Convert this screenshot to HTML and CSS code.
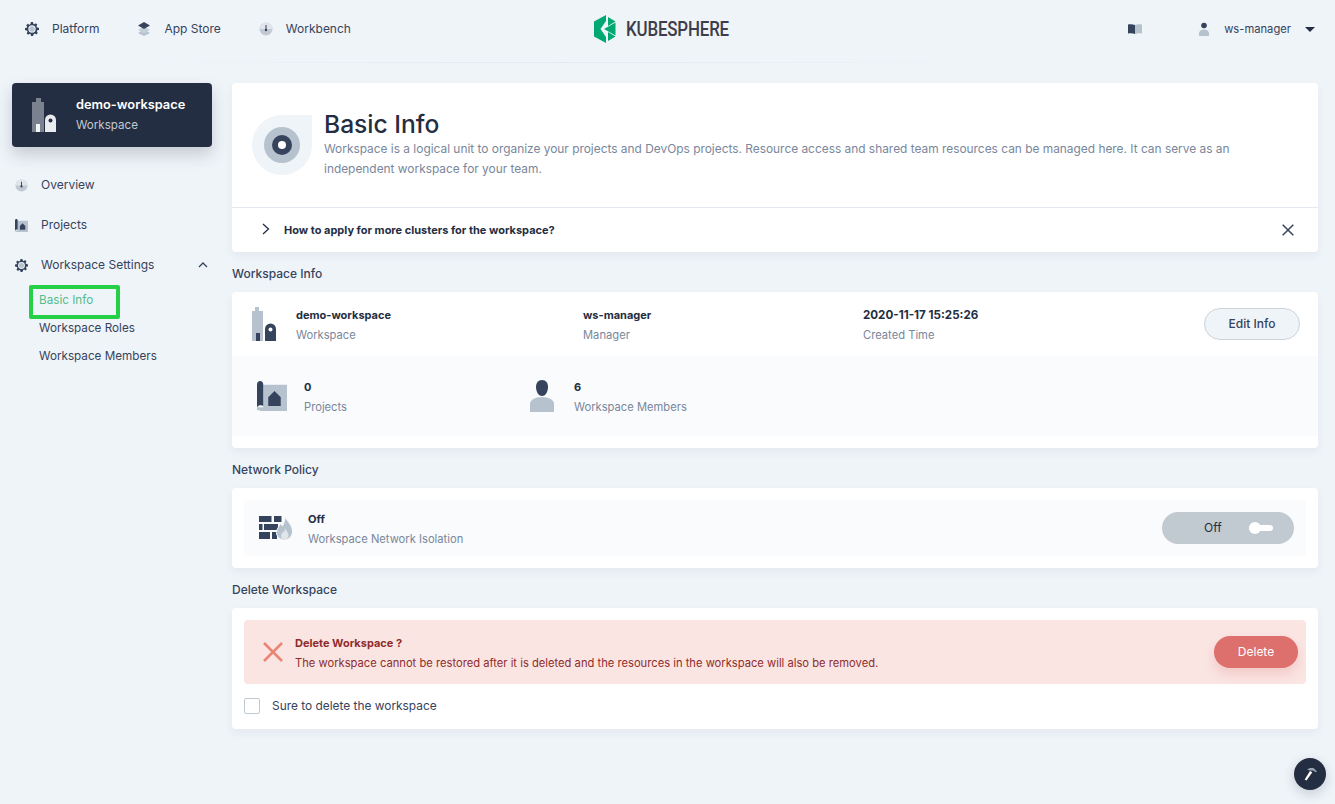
FILE: index.html
```html
<!DOCTYPE html>
<html lang="en">
<head>
  <meta charset="UTF-8">
  <meta name="viewport" content="width=device-width, initial-scale=1.0">
  <title>Basic Info - KubeSphere</title>
  <link rel="stylesheet" href="styles.css">
</head>
<body>
  <header class="topbar">
    <nav class="topnav">
      <a class="topnav-item">
        <svg class="ico14" viewBox="0 0 14 14"><use href="#gear"/></svg>
        <span>Platform</span>
      </a>
      <a class="topnav-item">
        <svg class="ico14" viewBox="0 0 14 14">
          <path d="M7 7.5 1 11l6 3 6-3z" fill="#b6c2cd"/>
          <path d="M7 4.500 1 8l6 3.300L13 8z" fill="#c5cfd8"/>
          <path d="M7 0 1 3.600 7 7l6-3.400z" fill="#36435c"/>
        </svg>
        <span>App Store</span>
      </a>
      <a class="topnav-item">
        <svg class="ico14" viewBox="0 0 14 14"><use href="#gauge"/></svg>
        <span>Workbench</span>
      </a>
    </nav>
    <div class="logo">
      <svg class="logo-mark" viewBox="0 0 25 28">
        <path d="M0 6.500 12 0v6L6.500 14l5.500 8v6L0 21.500z" fill="#00a971"/>
        <path d="M14 2l7.500 4.500L14 11z" fill="#00a971"/>
        <path d="M10 14l11.500-6.500v13z" fill="#00a971"/>
        <path d="M14 17l7.500 4.500L14 26z" fill="#00a971"/>
      </svg>
      <span class="logo-text">KUBESPHERE</span>
    </div>
    <div class="topbar-right">
      <svg class="book" viewBox="0 0 14 10">
        <path d="M0 .5C2 0 5 0 7 1v9C5 9 2 9 0 9.500z" fill="#36435c"/>
        <path d="M7 1c2-1 5-1 7-.5v9C12 9 9 9 7 10z" fill="#b6c2cd"/>
      </svg>
      <div class="user">
        <svg class="ico14" viewBox="0 0 14 14">
          <circle cx="7" cy="3.500" r="2.800" fill="#36435c"/>
          <path d="M2 14v-2.500C2 9 4.500 7.500 7 7.500s5 1.500 5 4V14z" fill="#b6c2cd"/>
        </svg>
        <span>ws-manager</span>
        <i class="caret"></i>
      </div>
    </div>
  </header>

  <div class="layout">
    <aside class="sidebar">
      <div class="ws-card">
        <svg class="ws-icon" viewBox="0 0 24 34">
          <path d="M0 34V4h4V0h5v4h3v30H8v-8H4v8z" fill="#7b828f"/>
          <path d="M4 34v-8h4v8z" fill="#f4f5f7"/>
          <path d="M13 34V22a5.500 5.500 0 0 1 11 0v12z" fill="#e9ebee"/>
          <circle cx="18.500" cy="22.500" r="2" fill="#242e42"/>
        </svg>
        <div>
          <div class="ws-name">demo-workspace</div>
          <div class="ws-type">Workspace</div>
        </div>
      </div>

      <ul class="menu">
        <li class="menu-item">
          <svg class="ico14" viewBox="0 0 14 14"><use href="#gauge"/></svg>
          <span>Overview</span>
        </li>
        <li class="menu-item">
          <svg class="ico14" viewBox="0 0 24 24"><use href="#projects"/></svg>
          <span>Projects</span>
        </li>
        <li class="menu-item">
          <svg class="ico14" viewBox="0 0 14 14"><use href="#gear"/></svg>
          <span>Workspace Settings</span>
          <svg class="chevron-up" viewBox="0 0 10 6"><path d="M1 5l4-4 4 4" fill="none" stroke="#36435c" stroke-width="1.300"/></svg>
        </li>
      </ul>
      <ul class="submenu">
        <li class="submenu-item is-active">Basic Info</li>
        <li class="submenu-item">Workspace Roles</li>
        <li class="submenu-item">Workspace Members</li>
      </ul>
    </aside>

    <main class="content">
      <section class="card banner">
        <div class="banner-head">
          <div class="banner-icon">
            <svg viewBox="0 0 36 36" class="banner-disc">
              <circle cx="18" cy="18" r="18" fill="#b6c2cd"/>
              <circle cx="18" cy="18" r="10" fill="#36435c"/>
              <circle cx="18" cy="18" r="4" fill="#fff"/>
            </svg>
          </div>
          <div class="banner-text">
            <h1>Basic Info</h1>
            <p>Workspace is a logical unit to organize your projects and DevOps projects. Resource access and shared team resources can be managed here. It can serve as an independent workspace for your team.</p>
          </div>
        </div>
        <div class="banner-tip">
          <svg class="tip-chevron" viewBox="0 0 8 12"><path d="M1 1l5.500 5L1 11" fill="none" stroke="#242e42" stroke-width="1.300"/></svg>
          <strong>How to apply for more clusters for the workspace?</strong>
          <svg class="tip-close" viewBox="0 0 12 12"><path d="M.7.700l10.600 10.600M11.300.700.700 11.300" fill="none" stroke="#36435c" stroke-width="1.500"/></svg>
        </div>
      </section>

      <h2 class="section-title">Workspace Info</h2>
      <section class="card info">
        <div class="info-top">
          <div class="info-cell cell-ws">
            <svg class="info-ws-icon" viewBox="0 0 24 34">
              <path d="M0 34V4h3V0h4v4h4v30H8v-8H4v8z" fill="#b6c2cd"/>
              <path d="M4 34v-8h4v8z" fill="#36435c"/>
              <path d="M13 34V22a5.500 5.500 0 0 1 11 0v12z" fill="#36435c"/>
              <circle cx="18.500" cy="22.500" r="2" fill="#fff"/>
            </svg>
            <div class="pair">
              <div class="val">demo-workspace</div>
              <div class="lbl">Workspace</div>
            </div>
          </div>
          <div class="info-cell cell-mgr">
            <div class="pair">
              <div class="val">ws-manager</div>
              <div class="lbl">Manager</div>
            </div>
          </div>
          <div class="info-cell cell-time">
            <div class="pair">
              <div class="val val-time">2020-11-17 15:25:26</div>
              <div class="lbl">Created Time</div>
            </div>
          </div>
          <button class="btn-edit">Edit Info</button>
        </div>
        <div class="stats">
          <div class="stat stat-projects">
            <svg class="stat-icon-p" viewBox="0 0 24 24"><use href="#projects"/></svg>
            <div>
              <div class="val">0</div>
              <div class="lbl">Projects</div>
            </div>
          </div>
          <div class="stat">
            <svg class="stat-icon-m" viewBox="0 0 24 32">
              <path d="M12 0c4 0 6 3 6 7s-2 9-6 9-6-5-6-9 2-7 6-7z" fill="#36435c"/>
              <path d="M0 32v-8c0-4 5-7 12-7s12 3 12 7v8z" fill="#b6c2cd"/>
            </svg>
            <div>
              <div class="val">6</div>
              <div class="lbl">Workspace Members</div>
            </div>
          </div>
        </div>
      </section>

      <h2 class="section-title">Network Policy</h2>
      <section class="card policy">
        <div class="policy-row">
          <svg class="policy-icon" viewBox="0 0 34 24">
            <path d="M0 0h12.500v6H0zM15 0h7.500v6H15zM0 8h3.500v6H0zM5 8h14v6H5zM0 16h11v7H0zM13 16h5v7h-5z" fill="#36435c"/>
            <path d="M26 0c1 5 7.500 8 7.500 15.500 0 4.500-3.500 8.500-8 8.500s-8-3.500-8-7.500c0-4 3-6 4-9.500l2 3c1.500-3 2.500-6 2.500-10.500z" fill="#b6c2cd" stroke="#f9fbfd" stroke-width="1"/>
            <path d="M26 12c1 3 3.500 4.500 3.500 7.500 0 2-1.500 4-4 4s-3.500-2-3.500-3.500c0-2 1.500-3 2-4.500l1 1c.5-1.500 1-3 1-4.500z" fill="#dfe5ea"/>
          </svg>
          <div class="pair">
            <div class="val">Off</div>
            <div class="lbl">Workspace Network Isolation</div>
          </div>
          <div class="toggle">
            <span>Off</span>
            <i class="knob"></i>
          </div>
        </div>
      </section>

      <h2 class="section-title">Delete Workspace</h2>
      <section class="card danger">
        <div class="alert">
          <svg class="alert-x" viewBox="0 0 20 20"><path d="M1 1l18 18M19 1 1 19" fill="none" stroke="#ea8573" stroke-width="2.500"/></svg>
          <div class="alert-text">
            <strong>Delete Workspace ?</strong>
            <p>The workspace cannot be restored after it is deleted and the resources in the workspace will also be removed.</p>
          </div>
          <button class="btn-delete">Delete</button>
        </div>
        <label class="confirm">
          <i class="checkbox"></i>
          <span>Sure to delete the workspace</span>
        </label>
      </section>
    </main>
  </div>

  <a class="tool-fab">
    <svg viewBox="0 0 16 16" class="tool-icon">
      <path d="M8 5l2.300 1.200L4.500 14.500 2.700 13.500z" fill="#fff"/>
      <path d="M5 3.500 8 2h3.500L15 5.500l-1 .8-3-1.800H8z" fill="#9aa5b3"/>
    </svg>
  </a>

  <svg class="defs" width="0" height="0">
    <defs>
      <g id="gear">
        <path fill-rule="evenodd" d="M6 0h2l.3 1.700 1.100.5L10.900 1.200l1.500 1.500-1 1.400.5 1.100L14 6v2l-1.700.3-.5 1.100 1 1.500-1.500 1.500-1.400-1-1.100.5L8 14H6l-.3-1.700-1.100-.5-1.500 1L1.600 11.300l1-1.500-.5-1.100L0 8V6l1.700-.3.5-1.100-1-1.400L2.700 1.700l1.500 1 1.100-.5zM7 3.300a3.700 3.700 0 1 0 0 7.400 3.700 3.700 0 0 0 0-7.400z" fill="#36435c"/>
        <circle cx="7" cy="7" r="2.700" fill="#b6c2cd"/>
      </g>
      <g id="gauge">
        <circle cx="7" cy="7" r="6.500" fill="#c1cad3"/>
        <path d="M.5 7a6.500 6.500 0 0 1 13 0z" fill="#dfe5ea"/>
        <path d="M6.500 3h1v5.500h-1z" fill="#36435c"/>
        <circle cx="7" cy="8" r="1.200" fill="#36435c"/>
      </g>
      <g id="projects">
        <path d="M5 3h19v21H3l-3-1v-2h5z" fill="#b6c2cd"/>
        <path d="M0 3c0-2 1-3 2.500-3S5 1 5 3v17c-1-1-4-1-5 1z" fill="#36435c"/>
        <path d="M9 20v-7l5-5 5 5v7z" fill="#36435c"/>
      </g>
    </defs>
  </svg>
</body>
</html>
```

FILE: styles.css
```css
* {
  box-sizing: border-box;
}
html, body {
  height: 100%;
}
body {
  margin: 0;
  min-height: 804px;
  overflow: hidden;
  background: #eff4f9;
  color: #36435c;
  font-family: Inter, "Noto Sans", sans-serif;
  font-size: 12px;
  line-height: 20px;
}
h1, h2, p, ul {
  margin: 0;
  padding: 0;
}
ul {
  list-style: none;
}
svg {
  display: block;
  flex: none;
}
.ico14 {
  width: 14px;
  height: 14px;
}
.defs {
  position: absolute;
}

/* top bar */
.topbar {
  position: relative;
  display: flex;
  align-items: center;
  justify-content: space-between;
  height: 63px;
  padding: 0 20px 5px 25px;
}
.topbar::after {
  content: "";
  position: absolute;
  left: 120px;
  right: 330px;
  bottom: 0;
  height: 1px;
  background: linear-gradient(90deg, #eff4f9, #e3e9ef 50%, #eff4f9);
}
.topnav {
  display: flex;
  gap: 38px;
}
.topnav-item {
  display: flex;
  align-items: center;
  gap: 13px;
}
.logo {
  position: absolute;
  left: 594px;
  top: 15px;
  display: flex;
  align-items: center;
  gap: 7px;
}
.logo-mark {
  width: 25px;
  height: 28px;
}
.logo-text {
  color: #3e3d49;
  font-family: "Roboto", sans-serif;
  font-size: 20px;
  font-weight: 500;
  line-height: 28px;
  letter-spacing: -.2px;
  transform: scaleX(.845);
  transform-origin: left center;
}
.topbar-right {
  display: flex;
  align-items: center;
  gap: 55px;
}
.book {
  width: 14px;
  height: 10px;
}
.user {
  display: flex;
  align-items: center;
  gap: 13px;
  font-size: 11.2px;
}
.caret {
  width: 0;
  height: 0;
  margin-left: 1px;
  border-left: 5px solid transparent;
  border-right: 5px solid transparent;
  border-top: 5px solid #242e42;
}

/* layout */
.layout {
  display: flex;
  padding-top: 20px;
}
.sidebar {
  width: 232px;
  flex: none;
  padding-left: 12px;
}
.content {
  width: 1086px;
  flex: none;
}

/* sidebar */
.ws-card {
  display: flex;
  align-items: center;
  gap: 20px;
  width: 200px;
  height: 64px;
  padding: 0 20px;
  border-radius: 4px;
  background: #242e42;
  box-shadow: 0 8px 16px rgba(36, 46, 66, .2);
  color: #fff;
}
.ws-icon {
  width: 24px;
  height: 34px;
}
.ws-name {
  font-size: 12.8px;
  font-weight: 600;
}
.ws-type {
  color: #c1c9d1;
  font-size: 11.6px;
}
.menu {
  margin-top: 18px;
}
.menu-item {
  display: flex;
  align-items: center;
  gap: 13px;
  height: 40px;
  padding-left: 3px;
}
.menu-item .ico14 {
  width: 13px;
  height: 13px;
}
.chevron-up {
  width: 10px;
  height: 6px;
  margin-left: 31px;
}
.submenu {
  margin-top: 1px;
  padding-left: 27px;
  font-size: 11.7px;
}
.submenu-item {
  height: 28px;
  line-height: 28px;
}
.submenu-item.is-active {
  position: relative;
  color: #55bc8a;
}
.submenu-item.is-active::after {
  content: "";
  box-sizing: border-box;
  position: absolute;
  left: -10px;
  top: -1px;
  width: 91px;
  height: 34px;
  border: 4px solid #25d047;
  border-radius: 2px;
}

/* cards */
.card {
  border-radius: 4px;
  background: #fff;
  box-shadow: 0 4px 8px rgba(36, 46, 66, .06);
}
.section-title {
  height: 40px;
  font-size: 12px;
  font-weight: 500;
  line-height: 44px;
}
.banner-head {
  display: flex;
  height: 125px;
  padding: 20px 20px 0;
  border-bottom: 1px solid #e3e9ef;
}
.banner-icon {
  display: flex;
  align-items: center;
  justify-content: center;
  width: 60px;
  height: 60px;
  margin-top: 12px;
  border-radius: 50% 0 50% 50%;
  background: #eff4f9;
  flex: none;
}
.banner-disc {
  width: 36px;
  height: 36px;
}
.banner-text {
  margin-left: 12px;
}
.banner-text h1 {
  height: 35px;
  margin-top: 1px;
  color: #242e42;
  font-size: 24.6px;
  font-weight: 500;
  line-height: 40px;
}
.banner-text p {
  color: #79879c;
  font-size: 11.9px;
  line-height: 20px;
}
.banner-tip {
  display: flex;
  align-items: center;
  height: 44px;
  padding: 0 24px 0 30px;
  color: #242e42;
}
.tip-chevron {
  width: 8px;
  height: 12px;
  margin-top: -2px;
}
.banner-tip strong {
  margin-left: 14px;
  font-size: 11px;
  font-weight: 700;
}
.tip-close {
  width: 12px;
  height: 12px;
  margin-left: auto;
  margin-top: -1px;
}

/* workspace info */
.info {
  height: 156px;
}
.info-top {
  display: flex;
  align-items: center;
  height: 64px;
  padding: 0 18px 0 20px;
}
.info-cell {
  display: flex;
  align-items: center;
}
.cell-ws {
  width: 331px;
  gap: 20px;
}
.cell-mgr {
  width: 280px;
}
.pair {
  padding-top: 1px;
}
.info-ws-icon {
  width: 24px;
  height: 34px;
}
.val {
  color: #242e42;
  font-size: 11px;
  font-weight: 700;
}
.val-time {
  font-size: 11.6px;
}
.lbl {
  color: #79879c;
  font-size: 11.2px;
}
.btn-edit {
  height: 32px;
  width: 96px;
  margin-left: auto;
  border: 1px solid #ccd3db;
  border-radius: 16px;
  background: #eff4f9;
  color: #36435c;
  font: 500 12px/20px Inter, sans-serif;
}
.stats {
  display: flex;
  height: 80px;
  padding: 21px 0 0 25px;
  background: #f9fbfd;
}
.stat {
  display: flex;
  gap: 17px;
}
.stat-projects {
  width: 273px;
}
.stat-icon-p {
  width: 30px;
  height: 30px;
  margin-top: 4px;
}
.stat-icon-m {
  width: 24px;
  height: 32px;
  margin-top: 3px;
  margin-right: 3px;
}

/* network policy */
.policy {
  height: 80px;
  padding: 12px;
}
.policy-row {
  display: flex;
  align-items: center;
  height: 56px;
  padding: 0 12px 0 15px;
  background: #f9fbfd;
}
.policy-icon {
  width: 34px;
  height: 24px;
  margin-right: 15px;
}
.toggle {
  display: flex;
  align-items: center;
  gap: 27px;
  width: 132px;
  height: 32px;
  margin-left: auto;
  padding-left: 42px;
  border-radius: 16px;
  background: #c1c9d1;
  color: #242e42;
}
.knob {
  position: relative;
  width: 24px;
  height: 6px;
  border-radius: 3px;
  background: #fff;
}
.knob::before {
  content: "";
  position: absolute;
  left: 0;
  top: -3px;
  width: 12px;
  height: 12px;
  border-radius: 50%;
  background: #fff;
}

/* delete */
.danger {
  height: 121px;
  padding: 12px;
}
.alert {
  display: flex;
  align-items: center;
  height: 64px;
  padding: 0 8px 0 19px;
  border-radius: 4px;
  background: #fae5e3;
  color: #8f2d2d;
}
.alert-x {
  width: 20px;
  height: 20px;
}
.alert-text {
  margin-left: 12px;
  padding-top: 1px;
}
.alert-text strong {
  display: block;
  font-size: 11px;
  font-weight: 700;
}
.alert-text p {
  font-size: 11.2px;
}
.btn-delete {
  width: 84px;
  height: 32px;
  margin-left: auto;
  border: 0;
  border-radius: 16px;
  background: #dd6f6c;
  box-shadow: 0 6px 12px rgba(202, 38, 33, .15);
  color: #fff;
  font: 400 12px/20px Inter, sans-serif;
}
.confirm {
  display: flex;
  align-items: center;
  gap: 12px;
  height: 20px;
  margin-top: 12px;
  font-size: 11.9px;
}
.checkbox {
  width: 16px;
  height: 16px;
  border: 1px solid #c1c9d1;
  border-radius: 2px;
  background: #fff;
}

/* floating tool button */
.tool-fab {
  position: fixed;
  right: 9px;
  bottom: 14px;
  display: flex;
  align-items: center;
  justify-content: center;
  width: 32px;
  height: 32px;
  border-radius: 50%;
  background: #242e42;
  box-shadow: 0 4px 12px rgba(36, 46, 66, .2);
}
.tool-icon {
  width: 16px;
  height: 16px;
}
```
